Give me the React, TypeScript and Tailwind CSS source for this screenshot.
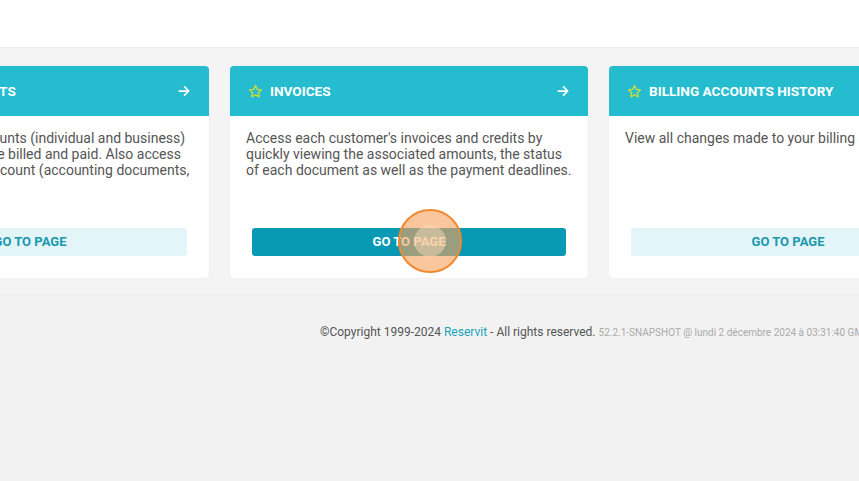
import React from "react";

const Star = () => (
  <svg width="15" height="15" viewBox="0 0 24 24" fill="none" stroke="#c8dc3c" strokeWidth="2.2" strokeLinejoin="round">
    <path d="M12 2.5l2.9 6.1 6.6.8-4.9 4.6 1.3 6.6L12 17.3l-5.9 3.3 1.3-6.6-4.9-4.6 6.6-.8z" />
  </svg>
);

const Arrow = () => (
  <svg width="14" height="14" viewBox="0 0 24 24" fill="none" stroke="white" strokeWidth="3" strokeLinecap="round" strokeLinejoin="round">
    <path d="M4 12h15M13 5l7 7-7 7" />
  </svg>
);

type CardProps = { title: string; lines: string[]; primary?: boolean };

const Card = ({ title, lines, primary }: CardProps) => (
  <div className="w-[358px] shrink-0 h-[212px] bg-white rounded-[4px] flex flex-col overflow-hidden shadow-[0_0_1px_rgba(0,0,0,0.08)]">
    <div className="h-[50px] bg-[#25bccf] flex items-center pl-[18px] pr-[18px]">
      <Star />
      <span className="ml-[7px] text-white font-bold text-[13.6px] flex-1 leading-[16px] pb-[1px]">{title}</span>
      <Arrow />
    </div>
    <div className="px-[16px] pt-[14px] text-[14px] leading-[16px] text-[#555] h-[112px]">
      {lines.map((l, i) => (
        <div key={i} className="whitespace-nowrap">{l}</div>
      ))}
    </div>
    <div className="px-[22px]">
      <div
        className={
          "h-[28px] rounded-[3px] flex items-center justify-center font-bold text-[13px] " +
          (primary ? "bg-[#0a99b4] text-white" : "bg-[#e3f5f8] text-[#1898ad]")
        }
      >
        GO TO PAGE
      </div>
    </div>
  </div>
);

export default function App() {
  return (
    <div className="w-[859px] h-[481px] overflow-hidden bg-[#f2f2f2] relative" style={{ fontFamily: "Roboto, 'Liberation Sans', sans-serif" }}>
      <div className="h-[48px] bg-white border-b border-[#ececec]" />
      <div className="h-[247px] bg-[#f4f4f4] border-b border-[#ebebeb] pt-[18px] overflow-hidden">
        <div className="flex gap-[21px] ml-[-149px] whitespace-nowrap">
          <Card
            title="BILLING ACCOUNTS"
            lines={[
              "Manage all your accounts (individual and business)",
              "which are meant to be billed and paid. Also access",
              "the details of each account (accounting documents,",
              "payments, etc.).",
            ]}
          />
          <Card
            title="INVOICES"
            primary
            lines={[
              "Access each customer's invoices and credits by",
              "quickly viewing the associated amounts, the status",
              "of each document as well as the payment deadlines.",
            ]}
          />
          <Card title="BILLING ACCOUNTS HISTORY" lines={["View all changes made to your billing accounts."]} />
        </div>
      </div>
      <div className="pl-[320px] pt-[28px] whitespace-nowrap text-[12px] text-[#555] flex items-baseline">
        <span>©Copyright 1999-2024 </span>
        <span className="text-[#1aa3b8] ml-[3px]">Reservit</span>
        <span className="ml-[3px]">- All rights reserved.</span>
        <span className="ml-[3px] text-[10px] text-[#aaa]">52.2.1-SNAPSHOT @ lundi 2 décembre 2024 à 03:31:40 GMT</span>
      </div>
      <div className="absolute left-[398px] top-[209px] w-[64px] h-[64px] rounded-full border-2 border-[#f08a30] bg-[rgba(250,160,90,0.6)] flex items-center justify-center">
        <div className="w-[32px] h-[32px] rounded-full bg-[rgba(255,225,190,0.45)]" />
      </div>
    </div>
  );
}
